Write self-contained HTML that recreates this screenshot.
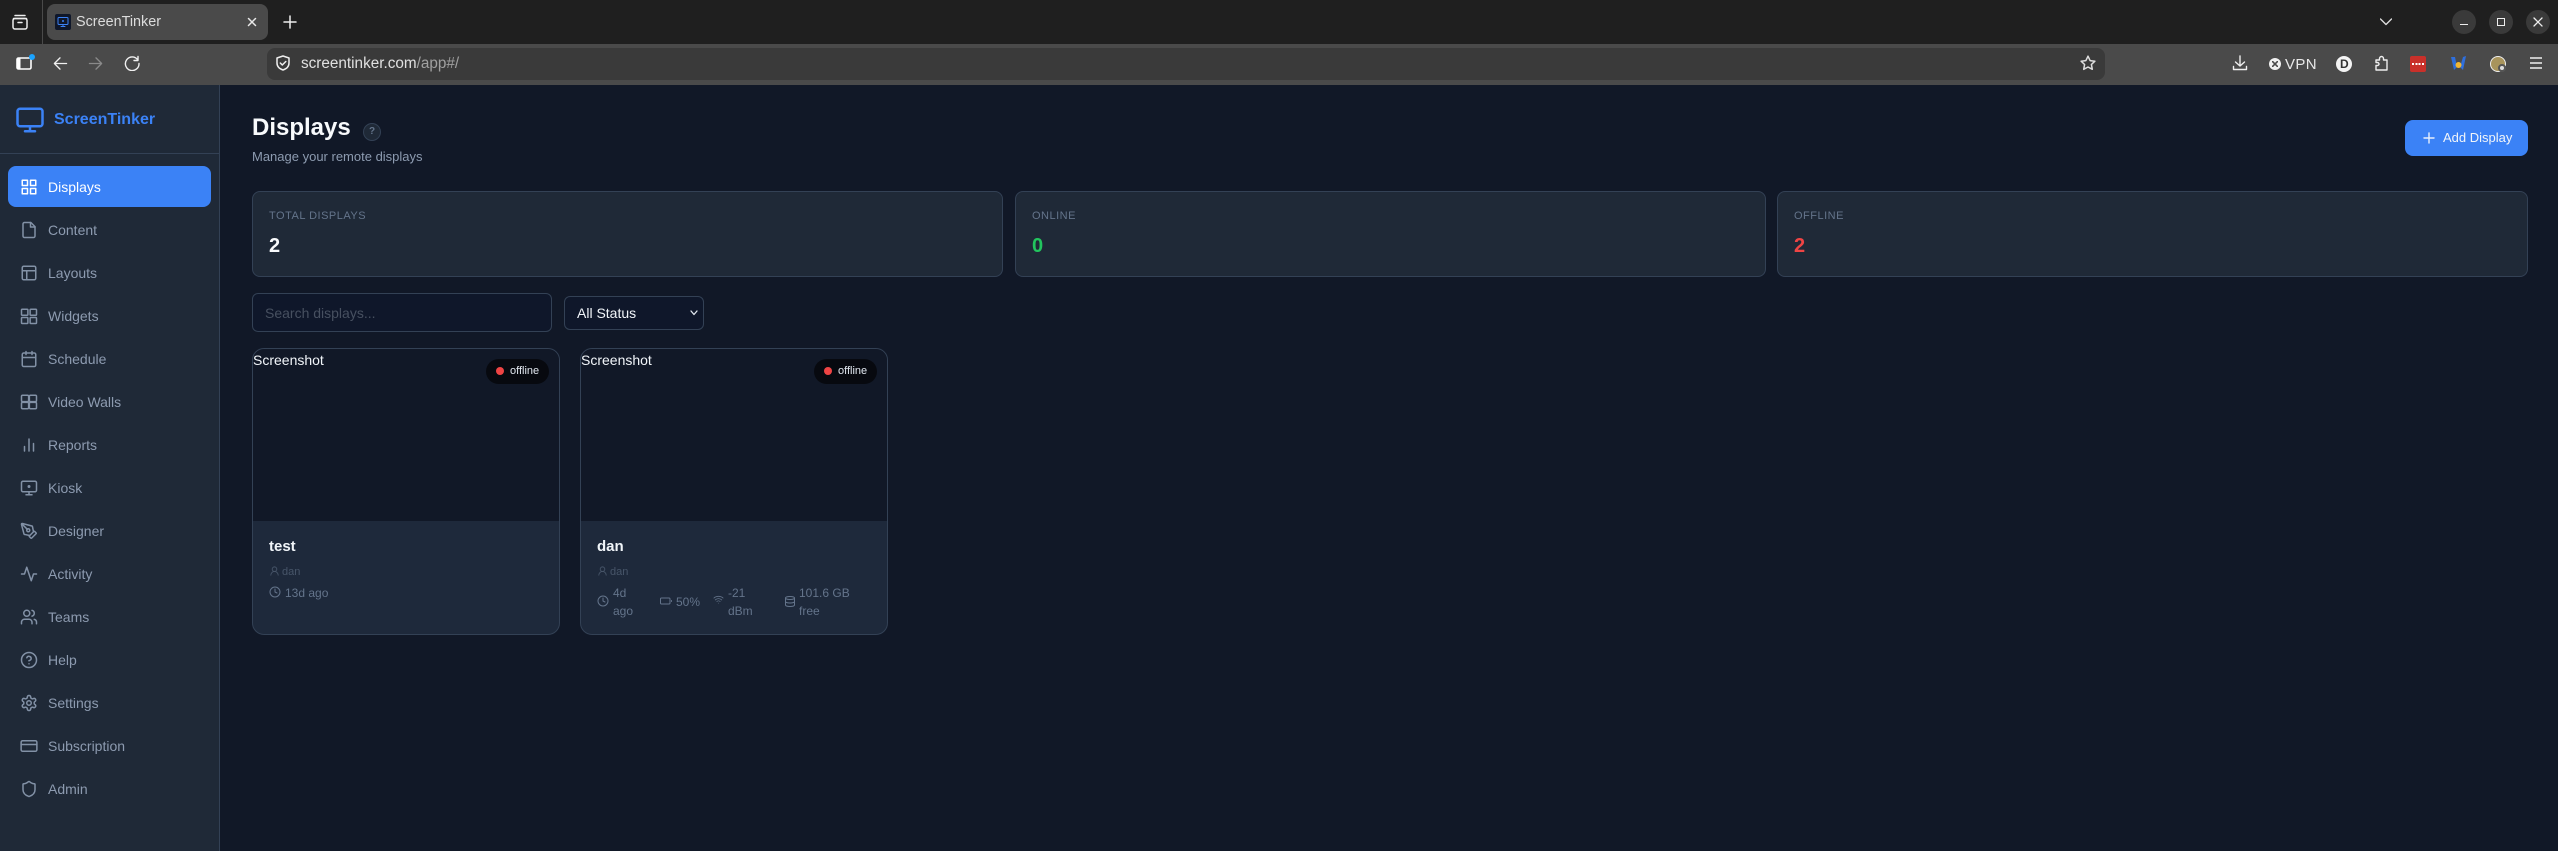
<!DOCTYPE html>
<html><head><meta charset="utf-8"><title>ScreenTinker</title>
<style>
*{box-sizing:border-box}
html,body{margin:0;padding:0;width:2558px;height:851px;overflow:hidden;background:#111827;font-family:"Liberation Sans",sans-serif}
.a{position:absolute}
.t{position:absolute;white-space:nowrap;line-height:1}
svg{position:absolute;fill:none;stroke-linecap:round;stroke-linejoin:round}
.ic{width:18px;height:18px;left:20px;stroke:#8291a6;stroke-width:2}
.nav{position:absolute;left:48px;font-size:14px;line-height:16px;color:#8d9bb0;white-space:nowrap}
.stat{position:absolute;top:191px;height:86px;width:751px;background:#1f2937;border:1px solid #334155;border-radius:8px}
.lbl{position:absolute;left:16px;top:18px;font-size:11px;line-height:13px;letter-spacing:.5px;color:#64748b}
.val{position:absolute;left:16px;top:42px;font-size:20px;line-height:24px;font-weight:700}
.card{position:absolute;top:348px;width:308px;height:287px;background:#1e293b;border:1px solid #334155;border-radius:12px;overflow:hidden}
.thumb{position:absolute;left:0;top:0;width:306px;height:172px;background:#111827}
.m{position:absolute;font-size:12px;line-height:18px;color:#64748b;white-space:nowrap}
.mi{stroke:#64748b;stroke-width:2}
</style></head><body>
<!-- browser chrome -->
<div class="a" style="left:0;top:0;width:2558px;height:44px;background:#1f1f1f"></div>
<div class="a" style="left:0;top:44px;width:2558px;height:41px;background:#4a4a4a"></div>
<div class="a" style="left:42px;top:0;width:1px;height:44px;background:#4a4a4a"></div>
<div class="a" style="left:47px;top:4px;width:221px;height:36px;background:#4a4a4a;border-radius:8px"></div>
<div class="a" style="left:55px;top:14px;width:16px;height:16px;background:#0f172a;border-radius:2px"></div>
<svg style="left:57px;top:16px;stroke:#3b82f6;stroke-width:2" width="12" height="12" viewBox="0 0 24 24"><rect x="2" y="3" width="20" height="14" rx="2"/><path d="M8 21h8M12 17v4"/><circle cx="12" cy="10" r="1"/></svg>
<div class="t" style="left:76px;top:15px;font-size:14.4px;color:#dcdcdc">ScreenTinker</div>
<svg style="left:247px;top:17px;stroke:#e8e8e8;stroke-width:1.500" width="10" height="10" viewBox="0 0 10 10"><path d="M1.500 1.500l7 7M8.500 1.500l-7 7"/></svg>
<svg style="left:282px;top:14px;stroke:#eee;stroke-width:1.500" width="16" height="16" viewBox="0 0 16 16"><path d="M2 8h12M8 2v12"/></svg>
<svg style="left:11px;top:13px;stroke:#eee;stroke-width:1.500" width="18" height="18" viewBox="0 0 18 18"><path d="M4 2.500h10M2.500 5.500h13"/><rect x="2" y="5.500" width="14" height="10.500" rx="2"/><path d="M7 9.500h4"/></svg>
<svg style="left:15px;top:54px;stroke:#fff;stroke-width:1.600" width="22" height="18" viewBox="0 0 22 18"><rect x="2" y="4" width="14" height="11" rx="1.500"/><path d="M4 5v9" stroke-width="3"/></svg>
<div class="a" style="left:29px;top:54px;width:6px;height:6px;border-radius:50%;background:#1aa3ff"></div>
<svg style="left:52px;top:56px;stroke:#f0f0f0;stroke-width:1.400" width="16" height="15" viewBox="0 0 16 16"><path d="M15 8H2M8 2L2 8l6 6"/></svg>
<svg style="left:88px;top:56px;stroke:#8a8a8a;stroke-width:1.400" width="16" height="15" viewBox="0 0 16 16"><path d="M1 8h13M8 2l6 6-6 6"/></svg>
<svg style="left:124px;top:55px;stroke:#f0f0f0;stroke-width:1.400" width="16" height="16" viewBox="0 0 16 16"><path d="M13.500 4.500A6.800 6.800 0 1 0 15 8.500M14 1.500v4h-4"/></svg>
<div class="a" style="left:267px;top:48px;width:1838px;height:32px;background:#3a3a3a;border-radius:8px"></div>
<svg style="left:275px;top:55px;stroke:#eee;stroke-width:1.500" width="16" height="16" viewBox="0 0 16 16"><path d="M8 1l6 2v5c0 3.500-2.500 5.800-6 7-3.500-1.200-6-3.500-6-7V3z"/><path d="M5.300 8l2 2 3.500-3.500"/></svg>
<div class="t" style="left:301px;top:56px;font-size:15.300px;color:#e0e0e0">screentinker.com<span style="color:#a0a0a0">/app#/</span></div>
<svg style="left:2080px;top:55px;stroke:#ddd;stroke-width:1.500" width="16" height="16" viewBox="0 0 16 16"><path d="M8 1.200l2.100 4.400 4.800.6-3.500 3.300.9 4.800L8 12l-4.300 2.300.9-4.800L1.100 6.200l4.800-.6z"/></svg>
<!-- right toolbar -->
<svg style="left:2232px;top:55px;stroke:#eee;stroke-width:1.400" width="16" height="16" viewBox="0 0 16 16"><path d="M8 1v10M3.500 7L8 11l4.500-4M1.500 11.500v3h13v-3"/></svg>
<div class="a" style="left:2269px;top:58px;width:12px;height:12px;border-radius:50%;background:#f0f0f0"></div>
<svg style="left:2272px;top:61px;stroke:#4a4a4a;stroke-width:1.600" width="6" height="6" viewBox="0 0 6 6"><path d="M.5 .5l5 5M5.500 .5l-5 5"/></svg>
<div class="t" style="left:2285px;top:57px;font-size:15px;letter-spacing:.4px;color:#e8e8e8">VPN</div>
<div class="a" style="left:2336px;top:56px;width:16px;height:16px;border-radius:50%;background:#f4f4f4"></div>
<div class="t" style="left:2340px;top:58px;font-size:12px;font-weight:700;color:#333">D</div>
<svg style="left:2373px;top:55px;stroke:#eee;stroke-width:1.400" width="16" height="16" viewBox="0 0 16 16"><path d="M3 15V10.500h1.500a1.500 1.500 0 0 0 0-3H3V5h3.500V3.500a2 2 0 0 1 4 0V5H14v10z"/></svg>
<div class="a" style="left:2410px;top:56px;width:16px;height:16px;background:#c9302a;border-radius:2px"></div>
<div class="a" style="left:2412px;top:63px;width:12px;height:2px;background:repeating-linear-gradient(90deg,#fff 0 2px,transparent 2px 3.300px)"></div>
<svg style="left:2450px;top:55px" width="17" height="17" viewBox="0 0 17 17"><path d="M1 2l3 13 3-3-2-10zM16 1l-3 14-3-3 3-10z" fill="#2f6fdc"/><circle cx="8.500" cy="10" r="3" fill="#f2b632"/></svg>
<div class="a" style="left:2490px;top:56px;width:16px;height:16px;border-radius:50%;background:#a8945c;border:1px solid #eee"></div>
<div class="a" style="left:2498px;top:64px;width:8px;height:8px;border-radius:50%;background:#ddd;border:2px solid #555"></div>
<svg style="left:2530px;top:57px;stroke:#f0f0f0;stroke-width:1.400" width="12" height="12" viewBox="0 0 12 12"><path d="M0 1h12M0 6h12M0 11h12"/></svg>
<svg style="left:2380px;top:18px;stroke:#ddd;stroke-width:1.400" width="12" height="8" viewBox="0 0 12 8"><path d="M.5 1l5.500 5.500L11.500 1"/></svg>
<div class="a" style="left:2452px;top:10px;width:24px;height:24px;border-radius:50%;background:#3a3a3a"></div>
<div class="a" style="left:2489px;top:10px;width:24px;height:24px;border-radius:50%;background:#3a3a3a"></div>
<div class="a" style="left:2526px;top:10px;width:24px;height:24px;border-radius:50%;background:#3a3a3a"></div>
<div class="a" style="left:2460px;top:24px;width:8px;height:1px;background:#eee"></div>
<div class="a" style="left:2497px;top:18px;width:8px;height:8px;border:1px solid #eee"></div>
<svg style="left:2533px;top:17px;stroke:#eee;stroke-width:1.300" width="10" height="10" viewBox="0 0 10 10"><path d="M1 1l8 8M9 1l-8 8"/></svg>

<!-- sidebar -->
<div class="a" style="left:0;top:85px;width:220px;height:766px;background:#1f2937;border-right:1px solid #334155"></div>
<div class="a" style="left:0;top:153px;width:219px;height:1px;background:#334155"></div>
<svg style="left:15px;top:105px;stroke:#3b82f6;stroke-width:2" width="30" height="30" viewBox="0 0 24 24"><rect x="2" y="3" width="20" height="14" rx="2"/><path d="M8 21h8M12 17v4"/></svg>
<div class="t" style="left:54px;top:112px;font-size:16px;font-weight:700;color:#3b82f6">ScreenTinker</div>
<div class="a" style="left:8px;top:166px;width:203px;height:41px;background:#3b82f6;border-radius:8px"></div>

<svg class="ic" style="top:178px;stroke:#fff" viewBox="0 0 24 24"><rect x="3" y="3" width="7" height="7"/><rect x="14" y="3" width="7" height="7"/><rect x="14" y="14" width="7" height="7"/><rect x="3" y="14" width="7" height="7"/></svg>
<div class="nav" style="top:179px;color:#fff">Displays</div>
<svg class="ic" style="top:221px" viewBox="0 0 24 24"><path d="M14.500 2H6a2 2 0 0 0-2 2v16a2 2 0 0 0 2 2h12a2 2 0 0 0 2-2V7.500z"/><path d="M14 2v6h6"/></svg>
<div class="nav" style="top:222px">Content</div>
<svg class="ic" style="top:264px" viewBox="0 0 24 24"><rect x="3" y="3" width="18" height="18" rx="2"/><path d="M3 9h18M9 21V9"/></svg>
<div class="nav" style="top:265px">Layouts</div>
<svg class="ic" style="top:307px" viewBox="0 0 24 24"><rect x="2" y="3" width="8.500" height="8" rx="1"/><rect x="13.500" y="3" width="8.500" height="8" rx="1"/><rect x="2" y="14" width="8.500" height="8" rx="1"/><rect x="13.500" y="14" width="8.500" height="8" rx="1"/></svg>
<div class="nav" style="top:308px">Widgets</div>
<svg class="ic" style="top:350px" viewBox="0 0 24 24"><rect x="3" y="4" width="18" height="18" rx="2"/><path d="M16 2v4M8 2v4M3 10h18"/></svg>
<div class="nav" style="top:351px">Schedule</div>
<svg class="ic" style="top:393px" viewBox="0 0 24 24"><rect x="2" y="3" width="9.500" height="8.500" rx="1.500"/><rect x="12.500" y="3" width="9.500" height="8.500" rx="1.500"/><rect x="2" y="12.500" width="9.500" height="8.500" rx="1.500"/><rect x="12.500" y="12.500" width="9.500" height="8.500" rx="1.500"/></svg>
<div class="nav" style="top:394px">Video Walls</div>
<svg class="ic" style="top:436px" viewBox="0 0 24 24"><path d="M18 20V10M12 20V4M6 20v-6"/></svg>
<div class="nav" style="top:437px">Reports</div>
<svg class="ic" style="top:479px" viewBox="0 0 24 24"><rect x="2" y="3" width="20" height="14" rx="2"/><path d="M8 21h8M12 17v4"/><circle cx="12" cy="10" r="1"/></svg>
<div class="nav" style="top:480px">Kiosk</div>
<svg class="ic" style="top:522px" viewBox="0 0 24 24"><path d="M15.700 21.300a1 1 0 0 1-1.400 0l-1.600-1.600a1 1 0 0 1 0-1.400l5.600-5.600a1 1 0 0 1 1.400 0l1.600 1.600a1 1 0 0 1 0 1.400z"/><path d="M18 13l-1.400-6.900a1 1 0 0 0-.7-.8L3.200 2a1 1 0 0 0-1.200 1.200l3.300 12.700a1 1 0 0 0 .8.700L13 18"/><path d="M2.300 2.300l7.300 7.300"/><circle cx="11" cy="11" r="2"/></svg>
<div class="nav" style="top:523px">Designer</div>
<svg class="ic" style="top:565px" viewBox="0 0 24 24"><path d="M22 12h-4l-3 9L9 3l-3 9H2"/></svg>
<div class="nav" style="top:566px">Activity</div>
<svg class="ic" style="top:608px" viewBox="0 0 24 24"><path d="M16 21v-2a4 4 0 0 0-4-4H6a4 4 0 0 0-4 4v2"/><circle cx="9" cy="7" r="4"/><path d="M22 21v-2a4 4 0 0 0-3-3.870M16 3.130a4 4 0 0 1 0 7.750"/></svg>
<div class="nav" style="top:609px">Teams</div>
<svg class="ic" style="top:651px" viewBox="0 0 24 24"><circle cx="12" cy="12" r="10"/><path d="M9.100 9a3 3 0 0 1 5.800 1c0 2-3 3-3 3M12 17h.01"/></svg>
<div class="nav" style="top:652px">Help</div>
<svg class="ic" style="top:694px" viewBox="0 0 24 24"><path d="M12.220 2h-.44a2 2 0 0 0-2 2v.18a2 2 0 0 1-1 1.730l-.43.250a2 2 0 0 1-2 0l-.15-.08a2 2 0 0 0-2.730.730l-.22.380a2 2 0 0 0 .730 2.730l.15.100a2 2 0 0 1 1 1.720v.510a2 2 0 0 1-1 1.740l-.15.090a2 2 0 0 0-.730 2.730l.22.380a2 2 0 0 0 2.730.730l.15-.08a2 2 0 0 1 2 0l.43.250a2 2 0 0 1 1 1.730V20a2 2 0 0 0 2 2h.44a2 2 0 0 0 2-2v-.18a2 2 0 0 1 1-1.730l.43-.250a2 2 0 0 1 2 0l.15.080a2 2 0 0 0 2.730-.730l.22-.390a2 2 0 0 0-.730-2.730l-.15-.080a2 2 0 0 1-1-1.740v-.500a2 2 0 0 1 1-1.740l.15-.090a2 2 0 0 0 .730-2.730l-.22-.380a2 2 0 0 0-2.730-.730l-.15.080a2 2 0 0 1-2 0l-.43-.250a2 2 0 0 1-1-1.730V4a2 2 0 0 0-2-2z"/><circle cx="12" cy="12" r="3"/></svg>
<div class="nav" style="top:695px">Settings</div>
<svg class="ic" style="top:737px" viewBox="0 0 24 24"><rect x="1.500" y="5" width="21" height="14" rx="2"/><path d="M1.500 10h21"/></svg>
<div class="nav" style="top:738px">Subscription</div>
<svg class="ic" style="top:780px" viewBox="0 0 24 24"><path d="M20 13c0 5-3.500 7.500-7.660 8.950a1 1 0 0 1-.670-.01C7.500 20.500 4 18 4 13V6a1 1 0 0 1 1-1c2 0 4.500-1.200 6.240-2.720a1.170 1.170 0 0 1 1.520 0C14.510 3.810 17 5 19 5a1 1 0 0 1 1 1z"/></svg>
<div class="nav" style="top:781px">Admin</div>

<!-- header -->
<div class="t" style="left:252px;top:114px;font-size:24px;font-weight:700;color:#f8fafc;line-height:28px">Displays</div>
<div class="a" style="left:363px;top:123px;width:18px;height:18px;border-radius:50%;background:#1f2937;border:1px solid #334155"></div>
<div class="t" style="left:369px;top:127px;font-size:10px;font-weight:700;color:#64748b">?</div>
<div class="t" style="left:252px;top:149px;font-size:13px;line-height:15px;color:#8d9bb0">Manage your remote displays</div>
<div class="a" style="left:2405px;top:120px;width:123px;height:36px;background:#3b82f6;border-radius:8px"></div>
<svg style="left:2423px;top:132px;stroke:#e6eefc;stroke-width:1.400" width="12" height="12" viewBox="0 0 12 12"><path d="M1 6h10M6 1v10"/></svg>
<div class="t" style="left:2443px;top:130px;font-size:13px;line-height:15px;color:#f1f5f9">Add Display</div>

<!-- stats -->
<div class="stat" style="left:252px"><div class="lbl">TOTAL DISPLAYS</div><div class="val" style="color:#f8fafc">2</div></div>
<div class="stat" style="left:1015px"><div class="lbl">ONLINE</div><div class="val" style="color:#22c55e">0</div></div>
<div class="stat" style="left:1777px"><div class="lbl">OFFLINE</div><div class="val" style="color:#ef4444">2</div></div>

<!-- filters -->
<div class="a" style="left:252px;top:293px;width:300px;height:39px;background:#0f172a;border:1px solid #334155;border-radius:6px"></div>
<div class="t" style="left:265px;top:305px;font-size:14px;line-height:16px;color:#475060">Search displays...</div>
<div class="a" style="left:564px;top:296px;width:140px;height:34px;background:#0f172a;border:1px solid #334155;border-radius:6px"></div>
<div class="t" style="left:577px;top:305px;font-size:14px;line-height:16px;color:#f1f5f9">All Status</div>
<svg style="left:690px;top:310px;stroke:#e2e8f0;stroke-width:1.300" width="8" height="6" viewBox="0 0 8 6"><path d="M1 1l3 3.500L7 1"/></svg>

<!-- card 1 -->
<div class="card" style="left:252px">
  <div class="thumb"></div>
  <div class="t" style="left:0;top:3px;font-size:14px;line-height:16px;color:#f1f5f9">Screenshot</div>
  <div class="a" style="left:233px;top:10px;width:63px;height:25px;border-radius:13px;background:#07090f"></div>
  <div class="a" style="left:243px;top:18px;width:8px;height:8px;border-radius:50%;background:#ef4444"></div>
  <div class="t" style="left:257px;top:16px;font-size:11px;line-height:13px;color:#e2e8f0">offline</div>
  <div class="t" style="left:16px;top:189px;font-size:15px;line-height:17px;font-weight:700;color:#f1f5f9">test</div>
  <svg class="mi" style="left:16px;top:216px;stroke:#475569" width="11" height="12" viewBox="0 0 24 24"><circle cx="12" cy="8" r="5"/><path d="M20 21a8 8 0 0 0-16 0"/></svg>
  <div class="t" style="left:29px;top:217px;font-size:11px;line-height:13px;color:#475569">dan</div>
  <svg class="mi" style="left:16px;top:237px" width="12" height="12" viewBox="0 0 24 24"><circle cx="12" cy="12" r="10"/><path d="M12 6v6l4 2"/></svg>
  <div class="m" style="left:32px;top:235px">13d ago</div>
</div>
<!-- card 2 -->
<div class="card" style="left:580px">
  <div class="thumb"></div>
  <div class="t" style="left:0;top:3px;font-size:14px;line-height:16px;color:#f1f5f9">Screenshot</div>
  <div class="a" style="left:233px;top:10px;width:63px;height:25px;border-radius:13px;background:#07090f"></div>
  <div class="a" style="left:243px;top:18px;width:8px;height:8px;border-radius:50%;background:#ef4444"></div>
  <div class="t" style="left:257px;top:16px;font-size:11px;line-height:13px;color:#e2e8f0">offline</div>
  <div class="t" style="left:16px;top:189px;font-size:15px;line-height:17px;font-weight:700;color:#f1f5f9">dan</div>
  <svg class="mi" style="left:16px;top:216px;stroke:#475569" width="11" height="12" viewBox="0 0 24 24"><circle cx="12" cy="8" r="5"/><path d="M20 21a8 8 0 0 0-16 0"/></svg>
  <div class="t" style="left:29px;top:217px;font-size:11px;line-height:13px;color:#475569">dan</div>
  <svg class="mi" style="left:16px;top:246px" width="12" height="12" viewBox="0 0 24 24"><circle cx="12" cy="12" r="10"/><path d="M12 6v6l4 2"/></svg>
  <div class="m" style="left:32px;top:235px">4d<br>ago</div>
  <svg class="mi" style="left:79px;top:246px" width="12" height="12" viewBox="0 0 24 24"><rect x="1" y="6" width="19" height="12" rx="2"/><path d="M23 11v2"/></svg>
  <div class="m" style="left:95px;top:244px">50%</div>
  <svg class="mi" style="left:132px;top:245px;stroke-width:1.800" width="11" height="11" viewBox="0 0 24 24"><path d="M12 20h.01M2 8.800a15 15 0 0 1 20 0M5 12.900a10 10 0 0 1 14 0M8.500 16.400a5 5 0 0 1 7 0"/></svg>
  <div class="m" style="left:147px;top:235px">-21<br>dBm</div>
  <svg class="mi" style="left:203px;top:246px" width="12" height="13" viewBox="0 0 24 24"><ellipse cx="12" cy="5" rx="9" ry="3"/><path d="M3 5v14a9 3 0 0 0 18 0V5M3 12a9 3 0 0 0 18 0"/></svg>
  <div class="m" style="left:218px;top:235px">101.6 GB<br>free</div>
</div>
</body></html>
